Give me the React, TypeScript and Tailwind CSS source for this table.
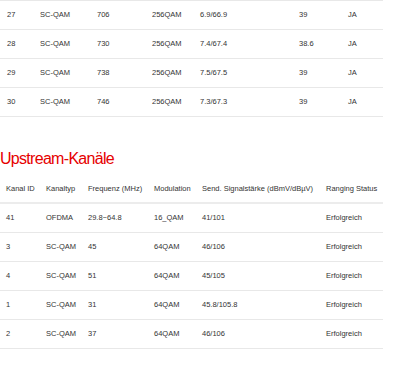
const downstream = [
  ['27', 'SC-QAM', '706', '256QAM', '6.9/66.9', '39', 'JA'],
  ['28', 'SC-QAM', '730', '256QAM', '7.4/67.4', '38.6', 'JA'],
  ['29', 'SC-QAM', '738', '256QAM', '7.5/67.5', '39', 'JA'],
  ['30', 'SC-QAM', '746', '256QAM', '7.3/67.3', '39', 'JA'],
]

const upstreamHead = ['Kanal ID', 'Kanaltyp', 'Frequenz (MHz)', 'Modulation', 'Send. Signalstärke (dBmV/dBµV)', 'Ranging Status']

const upstream = [
  ['41', 'OFDMA', '29.8~64.8', '16_QAM', '41/101', 'Erfolgreich'],
  ['3', 'SC-QAM', '45', '64QAM', '46/106', 'Erfolgreich'],
  ['4', 'SC-QAM', '51', '64QAM', '45/105', 'Erfolgreich'],
  ['1', 'SC-QAM', '31', '64QAM', '45.8/105.8', 'Erfolgreich'],
  ['2', 'SC-QAM', '37', '64QAM', '46/106', 'Erfolgreich'],
]

export default function App() {
  return (
    <div className="h-[386px] w-[400px] overflow-hidden bg-white font-['Liberation_Sans',Arial,sans-serif] text-[7.5px] text-[#333333]">
      {/* ── Downstream (tail) ─────────────────────────────────────── */}
      <div className="w-[383px]">
        <div className="h-px bg-[#e8e8e8]" />
        {downstream.map((row) => (
          <div
            key={row[0]}
            className="grid h-[29px] grid-cols-[33px_57px_55px_48px_99px_49px_42px] items-center border-b border-[#e8e8e8]"
          >
            {row.map((cell, i) => (
              <div key={i} className="whitespace-nowrap pl-[7px]">
                {cell}
              </div>
            ))}
          </div>
        ))}
      </div>

      {/* ── Upstream ──────────────────────────────────────────────── */}
      <h2 className="mt-[32px] h-[20px] text-[16px] font-normal leading-[20px] tracking-[-0.7px] text-[#e60000]">
        Upstream-Kanäle
      </h2>

      <div className="mt-[3px] w-[383px]">
        <div className="grid h-[32px] grid-cols-[40px_42px_66px_48px_124px_63px] items-center border-b-2 border-[#ececec] pt-[3px]">
          {upstreamHead.map((h) => (
            <div key={h} className="whitespace-nowrap pl-[6px]">
              {h}
            </div>
          ))}
        </div>
        {upstream.map((row) => (
          <div
            key={row[0]}
            className="grid h-[29px] grid-cols-[40px_42px_66px_48px_124px_63px] items-center border-b border-[#e8e8e8]"
          >
            {row.map((cell, i) => (
              <div key={i} className="whitespace-nowrap pl-[6px]">
                {cell}
              </div>
            ))}
          </div>
        ))}
      </div>
    </div>
  )
}
